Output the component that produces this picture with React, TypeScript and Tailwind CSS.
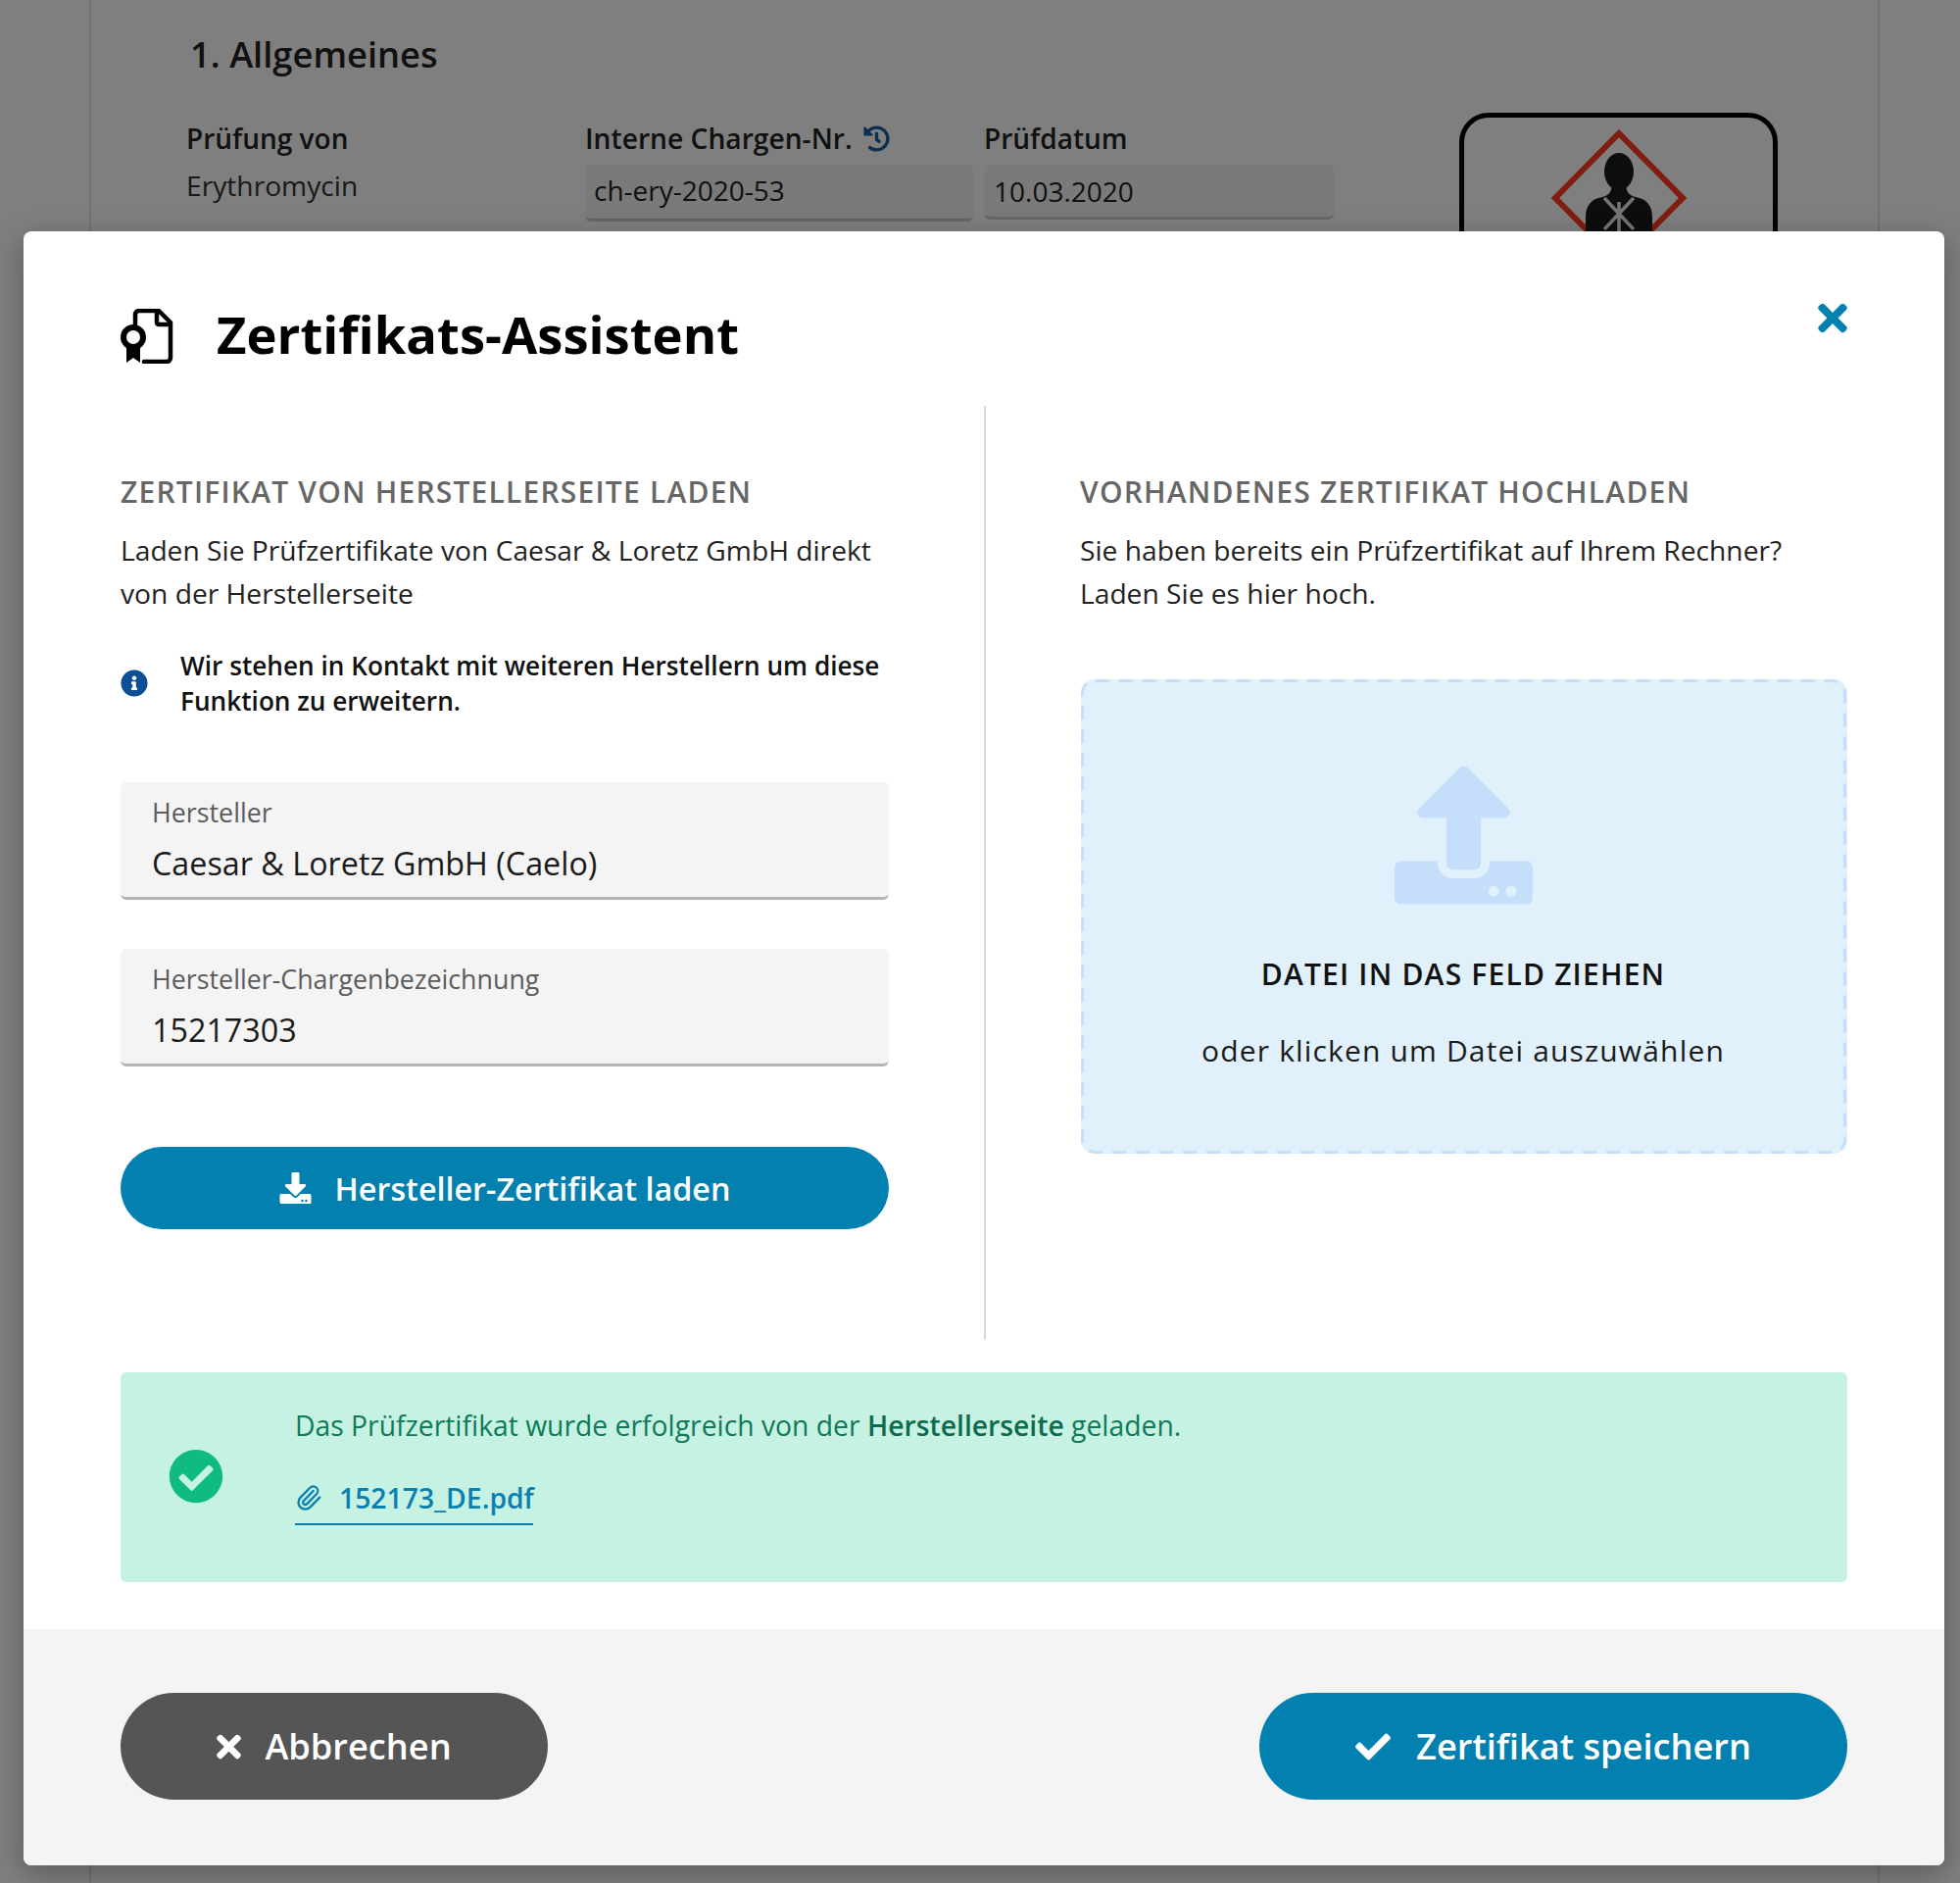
import {
  FaCheck,
  FaCheckCircle,
  FaDownload,
  FaHistory,
  FaInfoCircle,
  FaTimes,
  FaUpload,
} from "react-icons/fa";
import { Paperclip } from "lucide-react";

function CertificateIcon() {
  return (
    <svg viewBox="13 14 55 56" className="mt-[1px] h-[56px] w-[55px] shrink-0" fill="none" stroke="#000" strokeWidth="4.5">
      <path d="M28 30V20a4 4 0 0 1 4-4h20l12 12v36a4 4 0 0 1-4 4H37" strokeLinecap="round" strokeLinejoin="round" />
      <path d="M50 16v12a2 2 0 0 0 2 2h12" strokeLinejoin="round" />
      <circle cx="26" cy="43" r="10" strokeWidth="6" />
      <path d="M19 52v17l7-5 7 5V52z" fill="#000" stroke="none" />
    </svg>
  );
}

function HazardIcon() {
  return (
    <svg viewBox="0 0 140 145" className="h-[145px] w-[140px]">
      <path d="M70 6 135 72 70 138 5 72z" fill="#fff" stroke="#ff3a20" strokeWidth="6" />
      <ellipse cx="70" cy="45" rx="15" ry="19" fill="#1a1a1a" />
      <path d="M63 56h14c0 10 3 13 10 15 11 2 17 8 17 21v22H36V92c0-13 6-19 17-21 7-2 10-5 10-15z" fill="#1a1a1a" />
      <path d="M55 72 85 104M85 72 55 104M70 76v32" stroke="#e8e8e8" strokeWidth="3.5" />
    </svg>
  );
}

function BackgroundPage() {
  return (
    <div className="ml-[91px] h-full w-[1827px] border-x-2 border-[#e2e2e2] bg-white pl-[97px] text-[#222]">
      <h2 className="ml-[4px] pt-[31px] text-[36.3px] leading-[48px] font-semibold">1. Allgemeines</h2>
      <div className="mt-[36px] flex items-start">
        <div className="w-[407px] pt-[6px]">
          <div className="text-[28px] leading-[40px] font-semibold">Prüfung von</div>
          <div className="mt-[8px] text-[28.2px] leading-[40px] text-[#333]">Erythromycin</div>
        </div>
        <div className="w-[407px] pt-[6px]">
          <div className="flex items-center gap-[11px] text-[28.2px] leading-[40px] font-semibold">
            Interne Chargen-Nr.
            <FaHistory className="text-[27px] text-[#1f5f9e]" />
          </div>
          <div className="mt-[7px] flex h-[58px] w-[396px] items-center rounded-[6px] border-b-[3px] border-[#ccc] bg-[#f4f4f4] pb-[3px] pl-[9px] text-[28px]">
            ch-ery-2020-53
          </div>
        </div>
        <div className="w-[485px] pt-[6px]">
          <div className="text-[28px] leading-[40px] font-semibold">Prüfdatum</div>
          <div className="mt-[7px] flex h-[56px] w-[357px] items-center rounded-[6px] border-b-[3px] border-[#ccc] bg-[#f4f4f4] pl-[10px] text-[28px]">
            10.03.2020
          </div>
        </div>
        <div className="flex h-[220px] w-[325px] justify-center rounded-[30px] border-[5px] border-black bg-white pt-[10px]">
          <HazardIcon />
        </div>
      </div>
    </div>
  );
}

function Field({ label, value }: { label: string; value: string }) {
  return (
    <div className="h-[120px] rounded-[6px] border-b-[3px] border-[#b5b5b5] bg-[#f4f4f4] pt-[13px] pl-[32px]">
      <div className="text-[26.8px] leading-[36px] font-medium text-[#5c5c5c]">{label}</div>
      <div className="mt-[11px] text-[32.3px] leading-[44px] text-[#1a1a1a]">{value}</div>
    </div>
  );
}

export default function App() {
  return (
    <div className="relative h-[1921px] w-[2000px] overflow-hidden bg-white font-['Open_Sans',sans-serif]">
      <BackgroundPage />
      <div className="absolute inset-0 bg-black/50" />

      <div className="absolute top-[236px] left-[24px] flex h-[1667px] w-[1960px] flex-col overflow-hidden rounded-[8px] bg-white shadow-[0_8px_30px_rgba(0,0,0,0.3)]">
        <header className="flex h-[178px] items-start px-[99px] pt-[78px]">
          <CertificateIcon />
          <h1 className="-mt-[5px] ml-[43px] text-[52.6px] leading-[64px] font-bold text-black">Zertifikats-Assistent</h1>
          <FaTimes className="-mt-[11px] ml-auto h-[43px] w-[30px] text-[#0280b0]" />
        </header>

        <div className="grid h-[953px] grid-cols-[883px_1fr] pl-[99px]">
          <section className="border-r-2 border-[#d9d9d9] pt-[68px] pr-[97px]">
            <h3 className="text-[30px] leading-[40px] font-semibold tracking-[1.2px] text-[#666] uppercase">
              Zertifikat von Herstellerseite laden
            </h3>
            <p className="mt-[17px] text-[28.2px] leading-[44px] text-[#222]">
              Laden Sie Prüfzertifikate von Caesar &amp; Loretz GmbH direkt von der Herstellerseite
            </p>
            <div className="mt-[34px] flex items-center">
              <FaInfoCircle className="h-[28px] w-[28px] shrink-0 text-[#0c4f94]" />
              <p className="ml-[33px] text-[26.2px] leading-[36px] font-semibold text-[#111]">
                Wir stehen in Kontakt mit weiteren Herstellern um diese Funktion zu erweitern.
              </p>
            </div>
            <div className="mt-[65px] flex flex-col gap-[50px]">
              <Field label="Hersteller" value="Caesar & Loretz GmbH (Caelo)" />
              <Field label="Hersteller-Chargenbezeichnung" value="15217303" />
            </div>
            <button className="mt-[82px] flex h-[84px] w-full items-center justify-center gap-[24px] rounded-full bg-[#0280b0] text-[32.3px] font-semibold text-white">
              <FaDownload className="h-[32px] w-[33px]" />
              Hersteller-Zertifikat laden
            </button>
          </section>

          <section className="pt-[68px] pr-[99px] pl-[96px]">
            <h3 className="text-[30px] leading-[40px] font-semibold tracking-[1.2px] text-[#666] uppercase">
              Vorhandenes Zertifikat hochladen
            </h3>
            <p className="mt-[17px] text-[28.2px] leading-[44px] text-[#222]">
              Sie haben bereits ein Prüfzertifikat auf Ihrem Rechner? Laden Sie es hier hoch.
            </p>
            <div className="relative mt-[66px] ml-px flex h-[484px] flex-col items-center rounded-[14px] bg-[#e0f1fb] pt-[88px] pr-[2px]">
              <svg className="absolute inset-0 h-full w-full" fill="none">
                <rect
                  x="1.5"
                  y="1.5"
                  width="778"
                  height="481"
                  rx="13"
                  stroke="#c5dffa"
                  strokeWidth="3"
                  strokeDasharray="14 10"
                />
              </svg>
              <FaUpload className="h-[142px] w-[141px] text-[#c5dffa]" />
              <div className="mt-[51px] text-[30px] leading-[40px] font-semibold tracking-[1.2px] text-[#111] uppercase">
                Datei in das Feld ziehen
              </div>
              <div className="mt-[38px] text-[30px] leading-[40px] tracking-[1.16px] text-[#1a1a1a]">
                oder klicken um Datei auszuwählen
              </div>
            </div>
          </section>
        </div>

        <div className="mx-[99px] mt-[33px] flex h-[214px] rounded-[6px] bg-[#c6f2e4] pt-[32px] pl-[49px]">
          <FaCheckCircle className="-mt-[35px] h-[56px] w-[56px] shrink-0 self-center text-[#0fbb82]" />
          <div className="ml-[73px]">
            <p className="text-[28.3px] leading-[44px] text-[#0f7a58]">
              Das Prüfzertifikat wurde erfolgreich von der <b className="font-semibold text-[#0b6c4d]">Herstellerseite</b> geladen.
            </p>
            <a className="mt-[32px] flex w-[243px] items-center gap-[17px] border-b-2 border-[#0a80b0] pb-[6px] text-[28.3px] leading-[40px] font-semibold whitespace-nowrap text-[#0a80b0]">
              <Paperclip className="h-[28px] w-[28px] shrink-0" strokeWidth={2} />
              152173_DE.pdf
            </a>
          </div>
        </div>

        <footer className="mt-auto flex h-[241px] items-start justify-between bg-[#f4f4f4] px-[99px] pt-[65px]">
          <button className="flex h-[109px] w-[436px] items-center justify-center gap-[24px] rounded-full bg-[#555] text-[36.2px] font-semibold text-white">
            <FaTimes className="h-[36px] w-[25px]" />
            Abbrechen
          </button>
          <button className="flex h-[109px] w-[600px] items-center justify-center gap-[26px] rounded-full bg-[#0280b0] text-[36.2px] font-semibold text-white">
            <FaCheck className="h-[36px] w-[36px]" />
            Zertifikat speichern
          </button>
        </footer>
      </div>
    </div>
  );
}
